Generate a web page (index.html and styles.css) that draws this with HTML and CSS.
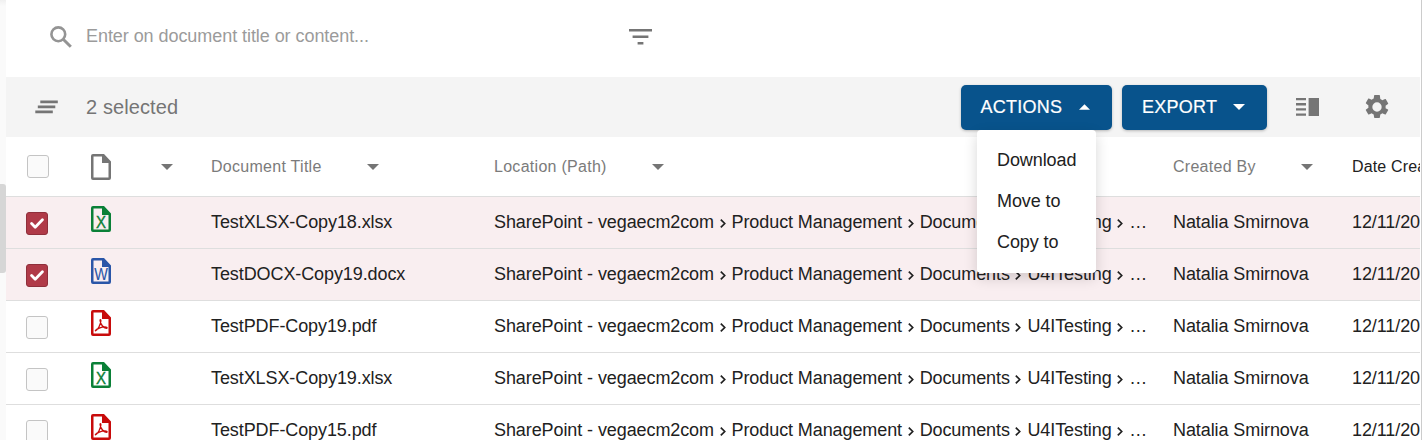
FILE: index.html
```html
<!DOCTYPE html>
<html lang="en">
<head>
<meta charset="utf-8">
<title>Documents</title>
<link rel="stylesheet" href="styles.css">
</head>
<body>
<svg class="defs" aria-hidden="true">
  <symbol id="file" viewBox="0 0 20 26">
    <path fill="currentColor" fill-rule="evenodd" d="M2 0H13L20 7.5V24Q20 26 18 26H2Q0 26 0 24V2Q0 0 2 0ZM2.5 2.4V23.6H17.5V9H11V2.4Z"/>
  </symbol>
  <symbol id="pdf" viewBox="0 0 20 26">
    <use href="#file" width="20" height="26"/>
    <path fill="none" stroke="currentColor" stroke-width="1.3" stroke-linecap="round" stroke-linejoin="round" d="M4.5 20.8C6.5 20.2 9.8 14.5 9.9 10.8C9.9 9.2 9 9.2 9.1 10.6C9.5 14.3 12.5 18 15.4 18.3C17 18.1 15.8 16.8 13.8 16.8C10.5 16.8 5.5 18.8 4.4 20.6"/>
  </symbol>
  <symbol id="xls" viewBox="0 0 20 26">
    <use href="#file" width="20" height="26"/>
    <text class="glyph" x="10" y="21.9" text-anchor="middle" textLength="10" lengthAdjust="spacingAndGlyphs">X</text>
  </symbol>
  <symbol id="doc" viewBox="0 0 20 26">
    <use href="#file" width="20" height="26"/>
    <text class="glyph wide" x="10" y="21.9" text-anchor="middle" textLength="13.6" lengthAdjust="spacingAndGlyphs">W</text>
  </symbol>
  <symbol id="down" viewBox="0 0 12 6"><path fill="currentColor" d="M0 0H12L6 6Z"/></symbol>
  <symbol id="sep" viewBox="0 0 6 9"><path fill="none" stroke="currentColor" stroke-width="1.7" d="M.8 .7L4.7 4.5L.8 8.3"/></symbol>
  <symbol id="tick" viewBox="0 0 14 11"><path fill="none" stroke="#fff" stroke-width="2.8" stroke-linecap="round" stroke-linejoin="round" d="M1.6 5.6L5.2 9.2L12.4 1.8"/></symbol>
</svg>
<div class="app">
  <aside class="rail"><div class="thumb"></div></aside>
  <main class="main">
    <div class="search">
      <svg class="search-icon" viewBox="0 0 22 22"><circle cx="8.3" cy="8.3" r="6.9" fill="none" stroke="#949494" stroke-width="2.6"/><path d="M13.2 13.2L20.8 20.8" stroke="#949494" stroke-width="3"/></svg>
      <span class="placeholder">Enter on document title or content...</span>
      <svg class="filter-icon" viewBox="0 0 23 16"><path fill="#757575" d="M0 0H23V2.6H0ZM3.6 6.5H19.4V9.1H3.6ZM8.6 13H14.4V15.6H8.6Z"/></svg>
    </div>
    <div class="toolbar">
      <svg class="clear-icon" viewBox="0 0 23 14"><path stroke="#757575" stroke-width="2.6" d="M5.3 1.9H22.8M2.8 6.9H20.3M.3 11.9H17.8"/></svg>
      <span class="selected">2 selected</span>
      <div class="actions">
        <button class="btn btn-actions"><span>ACTIONS</span><svg class="up" viewBox="0 0 12 6"><path fill="#fff" d="M0 6L6 0L12 6Z"/></svg></button>
        <div class="menu"><div>Download</div><div>Move to</div><div>Copy to</div></div>
      </div>
      <button class="btn btn-export"><span>EXPORT</span><svg class="up"><use href="#down"/></svg></button>
      <svg class="panel-icon" viewBox="0 0 23 18"><path fill="#757575" d="M0 0H10V2.3H0ZM0 5.1H10V7.4H0ZM0 10.3H10V12.6H0ZM0 15.5H10V17.8H0ZM12.6 0H23V18H12.6Z"/></svg>
      <svg class="gear-icon" viewBox="2.2 2 19.6 20"><path fill="#757575" d="M19.14 12.94c.04-.3.06-.61.06-.94 0-.32-.02-.64-.07-.94l2.03-1.58c.18-.14.23-.41.12-.61l-1.92-3.32c-.12-.22-.37-.29-.59-.22l-2.39.96c-.5-.38-1.03-.7-1.62-.94L14.4 2.4c-.04-.24-.24-.41-.48-.41h-3.84c-.24 0-.43.17-.47.41l-.36 2.54c-.59.24-1.13.57-1.62.94l-2.39-.96c-.22-.08-.47 0-.59.22L2.74 8.47c-.12.21-.08.47.12.61l2.03 1.58c-.05.3-.09.63-.09.94s.02.64.07.94l-2.03 1.58c-.18.14-.23.41-.12.61l1.92 3.32c.12.22.37.29.59.22l2.39-.96c.5.38 1.03.7 1.62.94l.36 2.54c.05.24.24.41.48.41h3.84c.24 0 .44-.17.47-.41l.36-2.54c.59-.24 1.13-.56 1.62-.94l2.39.96c.22.08.47 0 .59-.22l1.92-3.32c.12-.22.07-.47-.12-.61zM12 15.9a3.9 3.9 0 1 1 0-7.8 3.9 3.9 0 0 1 0 7.8z"/></svg>
    </div>
    <div class="table">
      <div class="row head">
        <div><span class="box"></span></div>
        <div class="type"><svg class="file"><use href="#file"/></svg><svg class="sort"><use href="#down"/></svg></div>
        <div class="col-title">Document Title<svg class="sort"><use href="#down"/></svg></div>
        <div class="col-path">Location (Path)<svg class="sort"><use href="#down"/></svg></div>
        <div class="col-by">Created By<svg class="sort"><use href="#down"/></svg></div>
        <div class="col-date">Date Crea</div>
      </div>
      <div class="row on">
        <div><span class="box checked"><svg><use href="#tick"/></svg></span></div>
        <div><svg class="file green"><use href="#xls"/></svg></div>
        <div>TestXLSX-Copy18.xlsx</div>
        <div class="path">SharePoint - vegaecm2com<svg><use href="#sep"/></svg>Product Management<svg><use href="#sep"/></svg>Documents<svg><use href="#sep"/></svg>U4ITesting<svg><use href="#sep"/></svg>…</div>
        <div>Natalia Smirnova</div><div>12/11/20</div>
      </div>
      <div class="row on">
        <div><span class="box checked"><svg><use href="#tick"/></svg></span></div>
        <div><svg class="file blue"><use href="#doc"/></svg></div>
        <div>TestDOCX-Copy19.docx</div>
        <div class="path">SharePoint - vegaecm2com<svg><use href="#sep"/></svg>Product Management<svg><use href="#sep"/></svg>Documents<svg><use href="#sep"/></svg>U4ITesting<svg><use href="#sep"/></svg>…</div>
        <div>Natalia Smirnova</div><div>12/11/20</div>
      </div>
      <div class="row">
        <div><span class="box"></span></div>
        <div><svg class="file red"><use href="#pdf"/></svg></div>
        <div>TestPDF-Copy19.pdf</div>
        <div class="path">SharePoint - vegaecm2com<svg><use href="#sep"/></svg>Product Management<svg><use href="#sep"/></svg>Documents<svg><use href="#sep"/></svg>U4ITesting<svg><use href="#sep"/></svg>…</div>
        <div>Natalia Smirnova</div><div>12/11/20</div>
      </div>
      <div class="row">
        <div><span class="box"></span></div>
        <div><svg class="file green"><use href="#xls"/></svg></div>
        <div>TestXLSX-Copy19.xlsx</div>
        <div class="path">SharePoint - vegaecm2com<svg><use href="#sep"/></svg>Product Management<svg><use href="#sep"/></svg>Documents<svg><use href="#sep"/></svg>U4ITesting<svg><use href="#sep"/></svg>…</div>
        <div>Natalia Smirnova</div><div>12/11/20</div>
      </div>
      <div class="row">
        <div><span class="box"></span></div>
        <div><svg class="file red"><use href="#pdf"/></svg></div>
        <div>TestPDF-Copy15.pdf</div>
        <div class="path">SharePoint - vegaecm2com<svg><use href="#sep"/></svg>Product Management<svg><use href="#sep"/></svg>Documents<svg><use href="#sep"/></svg>U4ITesting<svg><use href="#sep"/></svg>…</div>
        <div>Natalia Smirnova</div><div>12/11/20</div>
      </div>
    </div>
  </main>
</div>
</body>
</html>
```
FILE: styles.css
```css
* { box-sizing: border-box; }
body { margin: 0; font-family: "Liberation Sans", Arial, sans-serif; font-size: 18px; letter-spacing: -.09px; color: #212121; background: #fff; overflow: hidden; }
svg { display: block; flex: none; }
.defs { display: none; }
.glyph { font: 17px "Liberation Sans", Arial, sans-serif; letter-spacing: 0; fill: currentColor; stroke: currentColor; stroke-width: .4px; }
.wide { stroke-width: .1px; }
.app { display: flex; width: 1422px; height: 440px; overflow: hidden; border-right: 1px solid #ccc; }
.rail { width: 6px; flex: none; background: linear-gradient(#f0f0f0, #fafafa 6px); padding-top: 184px; }
.thumb { height: 89px; background: #d6d6d6; border-radius: 0 3px 3px 0; }
.main { width: 1414px; flex: none; overflow: hidden; }

.search { height: 77px; padding: 0 0 4px 44px; display: flex; align-items: center; }
.search-icon { width: 22px; height: 22px; }
.placeholder { width: 543px; margin-left: 14px; color: #9b9b9b; line-height: 22px; padding-bottom: 1px; letter-spacing: -.06px; }
.filter-icon { width: 23px; height: 16px; }

.toolbar { height: 60px; background: #f4f4f4; padding-left: 29px; display: flex; align-items: center; }
.clear-icon { width: 23px; height: 14px; }
.selected { font-size: 20px; color: #757575; margin-left: 28px; letter-spacing: .1px; }
.actions { margin-left: auto; position: relative; }
.btn { display: flex; align-items: center; justify-content: space-between; height: 45px; border: 0; border-radius: 5px; background: #08538c; color: #fff; font: 18px "Liberation Sans", Arial, sans-serif; letter-spacing: .25px; -webkit-text-stroke: .2px #fff; box-shadow: 0 1px 3px rgba(0,0,0,.25); }
.btn-actions { width: 151px; padding: 0 22px 0 19.5px; }
.btn-export { width: 145px; padding: 0 22px 0 20px; margin-left: 10px; }
.up { width: 11px; height: 6px; }
.btn-export .up { width: 12px; }
.menu { position: absolute; z-index: 2; left: 16px; top: 45px; width: 119px; height: 143px; padding: 10px 0 0 20px; background: #fff; border-radius: 4px; box-shadow: 0 5px 14px rgba(0,0,0,.16); }
.menu div { height: 41px; line-height: 40px; }
.panel-icon { width: 23px; height: 18px; margin-left: 29px; }
.gear-icon { width: 24px; height: 24px; margin: 0 31px 0 46px; }

.row { display: grid; grid-template-columns: 65px 120px 283px 679px 179px 200px; width: 1534px; height: 52px; padding-left: 20px; border-bottom: 1px solid #dedede; line-height: 51px; white-space: nowrap; }
.on { background: #f9eef0; }
.head { height: 60px; font-size: 16px; letter-spacing: .28px; color: #7b7b7b; line-height: 60px; }
.head > div { display: flex; align-items: center; }
.head .col-date { color: #212121; letter-spacing: .15px; }
.sort { width: 12px; height: 6px; color: #757575; }
.type .sort { margin-left: 50px; }
.col-title .sort { margin-left: 45px; }
.col-path .sort { margin-left: 45px; }
.col-by .sort { margin-left: 45px; }
.box { display: flex; align-items: center; justify-content: center; width: 22px; height: 23px; margin-top: 15px; border: 1px solid #c4c4c4; border-radius: 3px; background: #fafafa; }
.head .box { margin: 0 0 2px 1px; }
.checked { background: #b03a48; border-color: #8f2f3b; }
.checked svg { width: 14px; height: 11px; }
.file { width: 20px; height: 26px; margin-top: 9px; }
.head .file { margin: 0; color: #757575; }
.green { color: #0a8037; }
.blue { color: #2a56a8; }
.red { color: #c80b0b; }
.path { display: flex; }
.path svg { width: 6px; height: 9px; margin: 22px 6px 0 5.6px; }
```
